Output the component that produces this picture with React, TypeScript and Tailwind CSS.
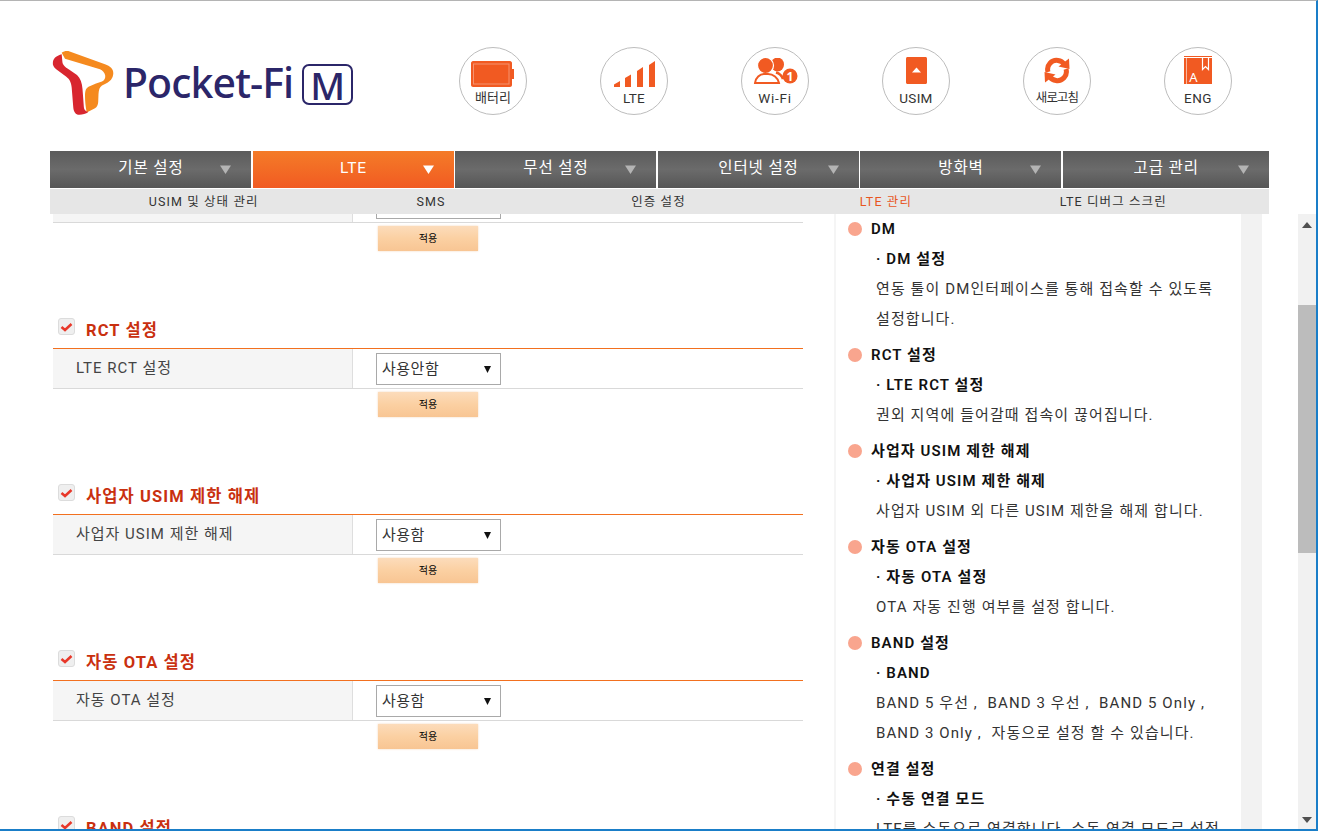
import clsx from "clsx";

const FONT = "font-['Roboto','Noto_Sans_CJK_KR',sans-serif]";

const menus = ["기본 설정", "LTE", "무선 설정", "인터넷 설정", "방화벽", "고급 관리"];
const subMenus = ["USIM 및 상태 관리", "SMS", "인증 설정", "LTE 관리", "LTE 디버그 스크린"];

const sections = [
  { title: "DM 설정", label: "DM 설정", value: "사용함" },
  { title: "RCT 설정", label: "LTE RCT 설정", value: "사용안함" },
  { title: "사업자 USIM 제한 해제", label: "사업자 USIM 제한 해제", value: "사용함" },
  { title: "자동 OTA 설정", label: "자동 OTA 설정", value: "사용함" },
  { title: "BAND 설정", label: "BAND", value: "자동" },
];

const help = [
  { title: "DM", sub: "DM 설정", body: ["연동 툴이 DM인터페이스를 통해 접속할 수 있도록", "설정합니다."] },
  { title: "RCT 설정", sub: "LTE RCT 설정", body: ["권외 지역에 들어갈때 접속이 끊어집니다."] },
  { title: "사업자 USIM 제한 해제", sub: "사업자 USIM 제한 해제", body: ["사업자 USIM 외 다른 USIM 제한을 해제 합니다."] },
  { title: "자동 OTA 설정", sub: "자동 OTA 설정", body: ["OTA 자동 진행 여부를 설정 합니다."] },
  { title: "BAND 설정", sub: "BAND", body: ["BAND 5 우선 ,  BAND 3 우선 ,  BAND 5 Only ,", "BAND 3 Only ,  자동으로 설정 할 수 있습니다."] },
  { title: "연결 설정", sub: "수동 연결 모드", body: ["LTE를 수동으로 연결합니다. 수동 연결 모드로 설정"] },
];

function Logo() {
  return (
    <div className="flex items-start">
      <svg width="64" height="70" viewBox="0 0 64 70" className="shrink-0">
        {/* orange ribbon: top band, then hooks back down into the stem */}
        <path d="M11.7 3.7C13.5 2.2 16 1.6 18.3 2L55 15.3C60 17 63.5 20 63.3 24.5C63 29.5 60 32.5 56 34.5L52 36.5C49.5 38 48.8 41 48.5 45L48.2 53C48 56 47 58 45 59.2L36.7 63.5C35.6 58 35 52 35 47C35 42 35.8 39.5 38.5 37.8L46 34.5L52 32.5C54.5 31.5 55.6 29 55.2 26.5C54.8 23.5 52.5 21.5 50 20.3L15 9.7Z" fill="#f58a1f" />
        {/* red ribbon: S curve down the left side */}
        <path d="M11.7 5.3C7 6.5 3.5 9 2.9 13C2.4 16 3.8 18.5 6.2 20.3L16 27.5C20 30.5 21.3 34 21.7 38.7L23.3 58.7C23.7 63 25.8 66 29.5 65.8C32.5 65.6 36 64.8 38.3 63C35 62 34 60.5 33.8 57.5L32.5 40C32 34 30.5 29.5 27 26L19 20.5C15 18 12.5 16 12.3 12Z" fill="#d8262f" />
      </svg>
      <span className="ml-[9px] mt-[10px] text-[41px] leading-[46px] font-medium tracking-[-0.9px] text-[#2b2669] font-['Noto_Sans',sans-serif]">
        Pocket-Fi
      </span>
      <span className="ml-[9px] mt-[15px] flex h-[41px] w-[51px] items-center justify-center rounded-[7px] border-[2.5px] border-[#2b2669] text-[38px] leading-none font-medium text-[#2b2669] font-['Noto_Sans',sans-serif]">
        M
      </span>
    </div>
  );
}

function BatteryIcon() {
  return (
    <svg width="44" height="26" viewBox="0 0 44 26">
      <path d="M2 0H39C40 0 41 1 41 2V8H43V18H41V24C41 25 40 26 39 26H2C1 26 0 25 0 24V2C0 1 1 0 2 0Z" fill="#f15a22" />
      <rect x="2.5" y="3" width="35.5" height="20" fill="none" stroke="#fff" strokeWidth="1" opacity="0.35" />
    </svg>
  );
}

function SignalIcon() {
  return (
    <svg width="41" height="26" viewBox="0 0 41 26">
      <path d="M0 26V23.5L6 20V26Z" fill="#f15a22" />
      <path d="M11 26V17L17 13.5V26Z" fill="#f15a22" />
      <path d="M23 26V10L29 6V26Z" fill="#f15a22" />
      <path d="M35 26V4L41 0V26Z" fill="#f15a22" />
    </svg>
  );
}

function WifiIcon() {
  return (
    <svg width="45" height="28" viewBox="0 0 45 28">
      <ellipse cx="24.5" cy="6.5" rx="6.5" ry="7" fill="#f15a22" />
      <ellipse cx="12.5" cy="7.5" rx="8" ry="8" fill="#f15a22" stroke="#fff" strokeWidth="1.2" />
      <path d="M2 25C2.5 19.5 7 16 11 16H15C20 16 25 19.5 26 25Z" fill="#fff" stroke="#f15a22" strokeWidth="2" />
      <path d="M23 14.5C26.5 15.5 29 18 30 21" fill="none" stroke="#f15a22" strokeWidth="2.5" />
      <circle cx="37" cy="18" r="7.5" fill="#f15a22" />
      <text x="37" y="22.5" textAnchor="middle" fontSize="12" fontWeight="700" fill="#fff" fontFamily="Noto Sans, sans-serif">1</text>
    </svg>
  );
}

function SimIcon() {
  return (
    <svg width="21" height="27" viewBox="0 0 21 27">
      <path d="M1.5 0H19.5C20.3 0 21 0.7 21 1.5V25.5C21 26.3 20.3 27 19.5 27H1.5C0.7 27 0 26.3 0 25.5V1.5C0 0.7 0.7 0 1.5 0Z" fill="#f15a22" />
      <path d="M10.5 10.5L15 15.5H6Z" fill="#fff" />
    </svg>
  );
}

function RefreshIcon() {
  return (
    <svg width="26" height="27" viewBox="0 0 26 27">
      <path d="M4 15C2 8 8 2.5 14 3.5C17 4 19 5.5 20 7" fill="none" stroke="#f15a22" strokeWidth="5" />
      <path d="M14.5 9.5L25.5 12L25 1.5Z" fill="#f15a22" />
      <path d="M22 12C24 19 18 24.5 12 23.5C9 23 7 21.5 6 20" fill="none" stroke="#f15a22" strokeWidth="5" />
      <path d="M11.5 17.5L0.5 15L1 25.5Z" fill="#f15a22" />
    </svg>
  );
}

function BookIcon() {
  return (
    <svg width="28" height="28" viewBox="0 0 28 28">
      <rect x="0" y="0" width="28" height="1" fill="#f15a22" />
      <rect x="0" y="2" width="28" height="26" fill="#f15a22" />
      <rect x="2" y="2" width="0.8" height="26" fill="#fff" opacity="0.7" />
      <path d="M18.5 2V13.5L21.5 10.5L24.5 13.5V2" fill="none" stroke="#fff" strokeWidth="1.2" />
      <text x="9.5" y="26" textAnchor="middle" fontSize="13" fill="#fff" fontFamily="Noto Sans, sans-serif">A</text>
    </svg>
  );
}

const statusIcons = [
  { label: "배터리", icon: <BatteryIcon />, top: "pt-[13px]", text: "text-[13px]" },
  { label: "LTE", icon: <SignalIcon />, top: "pt-[13px]", text: "text-[13.5px] tracking-[0.3px]" },
  { label: "Wi-Fi", icon: <WifiIcon />, top: "pt-[10px]", text: "text-[13.5px] tracking-[0.8px]" },
  { label: "USIM", icon: <SimIcon />, top: "pt-[9px]", text: "text-[13.5px] tracking-[0.3px]" },
  { label: "새로고침", icon: <RefreshIcon />, top: "pt-[9px]", text: "text-[12.5px] tracking-[-0.9px]" },
  { label: "ENG", icon: <BookIcon />, top: "pt-[8px]", text: "text-[13.5px] tracking-[0.5px]" },
];

function Arrow({ color }: { color: string }) {
  return (
    <svg width="11" height="9" viewBox="0 0 11 9" className="shrink-0">
      <path d="M0 0.5H11L5.5 9Z" fill={color} />
    </svg>
  );
}

function CheckBox() {
  return (
    <span className="flex h-[17px] w-[17px] shrink-0 items-center justify-center rounded-[3px] border border-[#dcdcdc] bg-[#efefef]">
      <svg width="13" height="10" viewBox="0 0 13 10">
        <path d="M1.5 5L5 8L11.5 2" fill="none" stroke="#e8382a" strokeWidth="2.5" />
      </svg>
    </span>
  );
}

function SettingSection({ title, label, value }: { title: string; label: string; value: string }) {
  return (
    <section className="h-[166px]">
      <div className="flex h-[34px] items-start border-b-[1.5px] border-b-[#f2701f]">
        <span className="ml-[5px] mt-[3px]"><CheckBox /></span>
        <h2 className="ml-[11px] mt-[4px] text-[16.5px] leading-[24px] font-bold tracking-[1.1px] text-[#c9300f]">{title}</h2>
      </div>
      <div className="flex h-[40px] border-b border-[#d9d9d9]">
        <div className="flex w-[300px] items-center border-r border-[#dedede] bg-[#f5f5f5] pl-[23px] text-[15px] tracking-[1px] text-[#444]">
          {label}
        </div>
        <div className="pl-[23px] pt-[4px]">
          <div className="flex h-[32px] w-[125px] items-center justify-between border border-[#a9a9a9] pl-[5px] pr-[9px] text-[15px] tracking-[0.5px] text-[#333]">
            <span>{value}</span>
            <svg width="7" height="7" viewBox="0 0 7 7"><path d="M0 0H7L3.5 7Z" fill="#111" /></svg>
          </div>
        </div>
      </div>
      <button className="ml-[325px] mt-[3px] block h-[25px] w-[100px] bg-gradient-to-b from-[#fcdcbb] via-[#fbd0a2] to-[#f8c593] text-[10px] text-black shadow-[0_0_2px_#f3d6bb]">
        적용
      </button>
    </section>
  );
}

export default function App() {
  return (
    <div className={clsx("flex h-[831px] w-[1318px] flex-col overflow-hidden border-t border-r-2 border-b-2 border-t-[#b4b4b4] border-r-[#1a7ec8] border-b-[#1a7ec8] bg-white", FONT)}>
      <header className="flex h-[150px] shrink-0 items-start">
        <div className="ml-[50px] mt-[48px] w-[409px] shrink-0"><Logo /></div>
        <div className="mt-[46px] flex gap-[73px]">
          {statusIcons.map(s => (
            <div key={s.label} className="h-[68px] w-[68px] rounded-full border-[1.5px] border-[#bdbdbd]">
              <div className={clsx("flex h-[41px] justify-center", s.top)}>{s.icon}</div>
              <div className={clsx("whitespace-nowrap text-center leading-[18px] text-[#333]", s.text)}>{s.label}</div>
            </div>
          ))}
        </div>
      </header>

      <nav className="relative z-10 ml-[50px] w-[1219px] shrink-0">
        <div className="grid h-[37px] grid-cols-[repeat(5,201px)_1fr] gap-[1.5px]">
          {menus.map(m => {
            const active = m === "LTE";
            return (
              <div
                key={m}
                className={clsx(
                  "grid grid-cols-[1fr_auto_1fr] items-center text-[15.5px] tracking-[0.9px] text-white",
                  active ? "bg-gradient-to-b from-[#f47b28] to-[#f15a22]" : "bg-gradient-to-b from-[#5b5b5b] via-[#6b6b6b] to-[#565656]"
                )}
              >
                <span />
                <span className="mb-[1px] ml-[1px]">{m}</span>
                <span className="flex justify-end pr-[20px]">
                  <Arrow color={active ? "#ffffff" : "#b4b4b4"} />
                </span>
              </div>
            );
          })}
        </div>
        <div className="mt-px grid h-[25px] grid-cols-5 items-center bg-[#e6e6e6] pl-[40px] pr-[42px] pt-px text-center text-[12.5px] tracking-[1.1px] text-[#333]">
          {subMenus.map(s => (
            <span key={s} className={clsx(s === "LTE 관리" && "text-[#e8561f]")}>{s}</span>
          ))}
        </div>
      </nav>

      <main className="flex min-h-0 flex-1 overflow-hidden">
        <div className="ml-[53px] mt-[-65px] w-[750px] shrink-0">
          {sections.map(s => (
            <SettingSection key={s.title} {...s} />
          ))}
        </div>
        <aside className="ml-[31px] w-[428px] shrink-0 overflow-hidden border-l-2 border-[#f5f5f5] bg-[#f2f2f2] pr-[21px]">
          <div className="h-[640px] bg-white pl-[12px] text-[15px] leading-[30px] tracking-[1.1px] text-[#333]">
            {help.map(h => (
              <div key={h.title} className="mb-[6px]">
                <div className="flex items-center font-semibold text-[#111]">
                  <span className="mr-[9px] h-[14px] w-[14px] shrink-0 rounded-full bg-[#f9a58e]" />
                  {h.title}
                </div>
                <div className="pl-[28px] font-semibold text-[#111]">· {h.sub}</div>
                {h.body.map(line => (
                  <div key={line} className="whitespace-pre pl-[28px]">{line}</div>
                ))}
              </div>
            ))}
          </div>
        </aside>
        <div className="ml-[36px] flex w-[18px] shrink-0 flex-col items-center bg-[#f1f1f1]">
          <svg width="10" height="6" viewBox="0 0 10 6" className="mt-[8px]"><path d="M5 0L10 6H0Z" fill="#505050" /></svg>
          <div className="mt-[77px] h-[248px] w-full bg-[#bcbcbc]" />
          <div className="flex-1" />
          <svg width="10" height="6" viewBox="0 0 10 6" className="mb-[6px]"><path d="M0 0H10L5 6Z" fill="#505050" /></svg>
        </div>
      </main>
    </div>
  );
}
